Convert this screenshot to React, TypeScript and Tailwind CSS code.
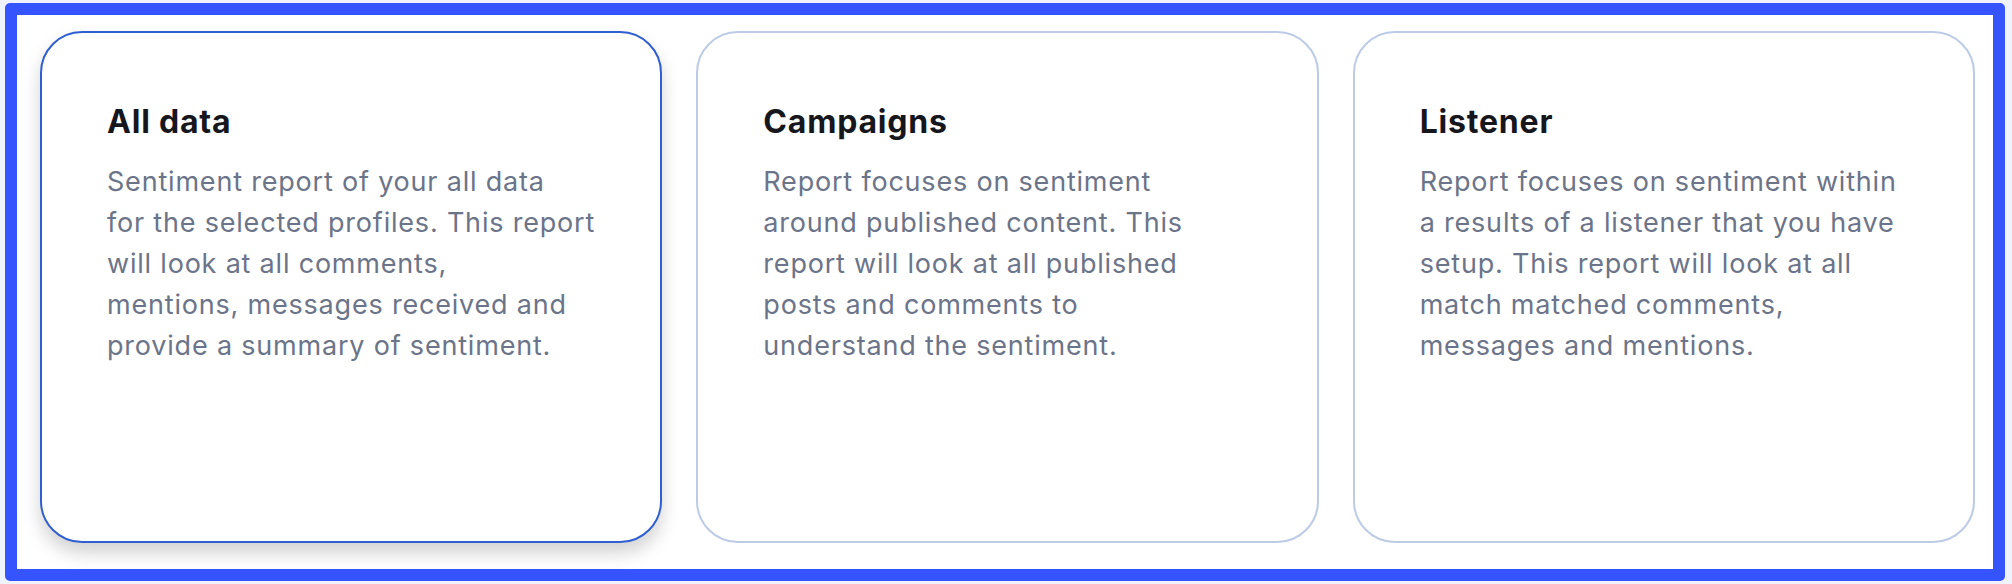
const reports = [
  {
    title: "All data",
    lines: [
      "Sentiment report of your all data",
      "for the selected profiles. This report",
      "will look at all comments,",
      "mentions, messages received and",
      "provide a summary of sentiment.",
    ],
  },
  {
    title: "Campaigns",
    lines: [
      "Report focuses on sentiment",
      "around published content. This",
      "report will look at all published",
      "posts and comments to",
      "understand the sentiment.",
    ],
  },
  {
    title: "Listener",
    lines: [
      "Report focuses on sentiment within",
      "a results of a listener that you have",
      "setup. This report will look at all",
      "match matched comments,",
      "messages and mentions.",
    ],
  },
];

function ReportCard({
  title,
  lines,
  selected,
}: {
  title: string;
  lines: string[];
  selected: boolean;
}) {
  return (
    <div
      className={
        selected
          ? "flex h-[512px] cursor-pointer flex-col rounded-[42px] border-2 border-[#2f5fd0] bg-white pt-[69px] pl-[65px] shadow-[0_10px_18px_rgba(0,0,0,0.18)]"
          : "flex h-[512px] cursor-pointer flex-col rounded-[42px] border-2 border-[#bccbe6] bg-white pt-[69px] pl-[65px]"
      }
    >
      <h3 className="text-[32px] leading-[40px] font-bold tracking-[0.8px] text-[#16171c]">
        {title}
      </h3>
      <p className="mt-[19px] text-[27px] leading-[41px] tracking-[0.8px] text-[#6b7489]">
        {lines.map((line) => (
          <span key={line} className="block whitespace-nowrap">
            {line}
          </span>
        ))}
      </p>
    </div>
  );
}

export default function App() {
  return (
    <div
      className="h-[584px] w-[2012px] bg-[#eef3fc] pt-[3px] pl-[5px]"
      style={{ fontFamily: "Inter, 'Noto Sans', sans-serif" }}
    >
      <div className="grid h-[578px] w-[2000px] grid-cols-3 items-start gap-[34px] rounded-[5px] border-[12px] border-[#3554fe] bg-white pt-4 pr-[18px] pb-[26px] pl-[23px]">
        {reports.map((r, i) => (
          <ReportCard key={r.title} title={r.title} lines={r.lines} selected={i === 0} />
        ))}
      </div>
    </div>
  );
}
